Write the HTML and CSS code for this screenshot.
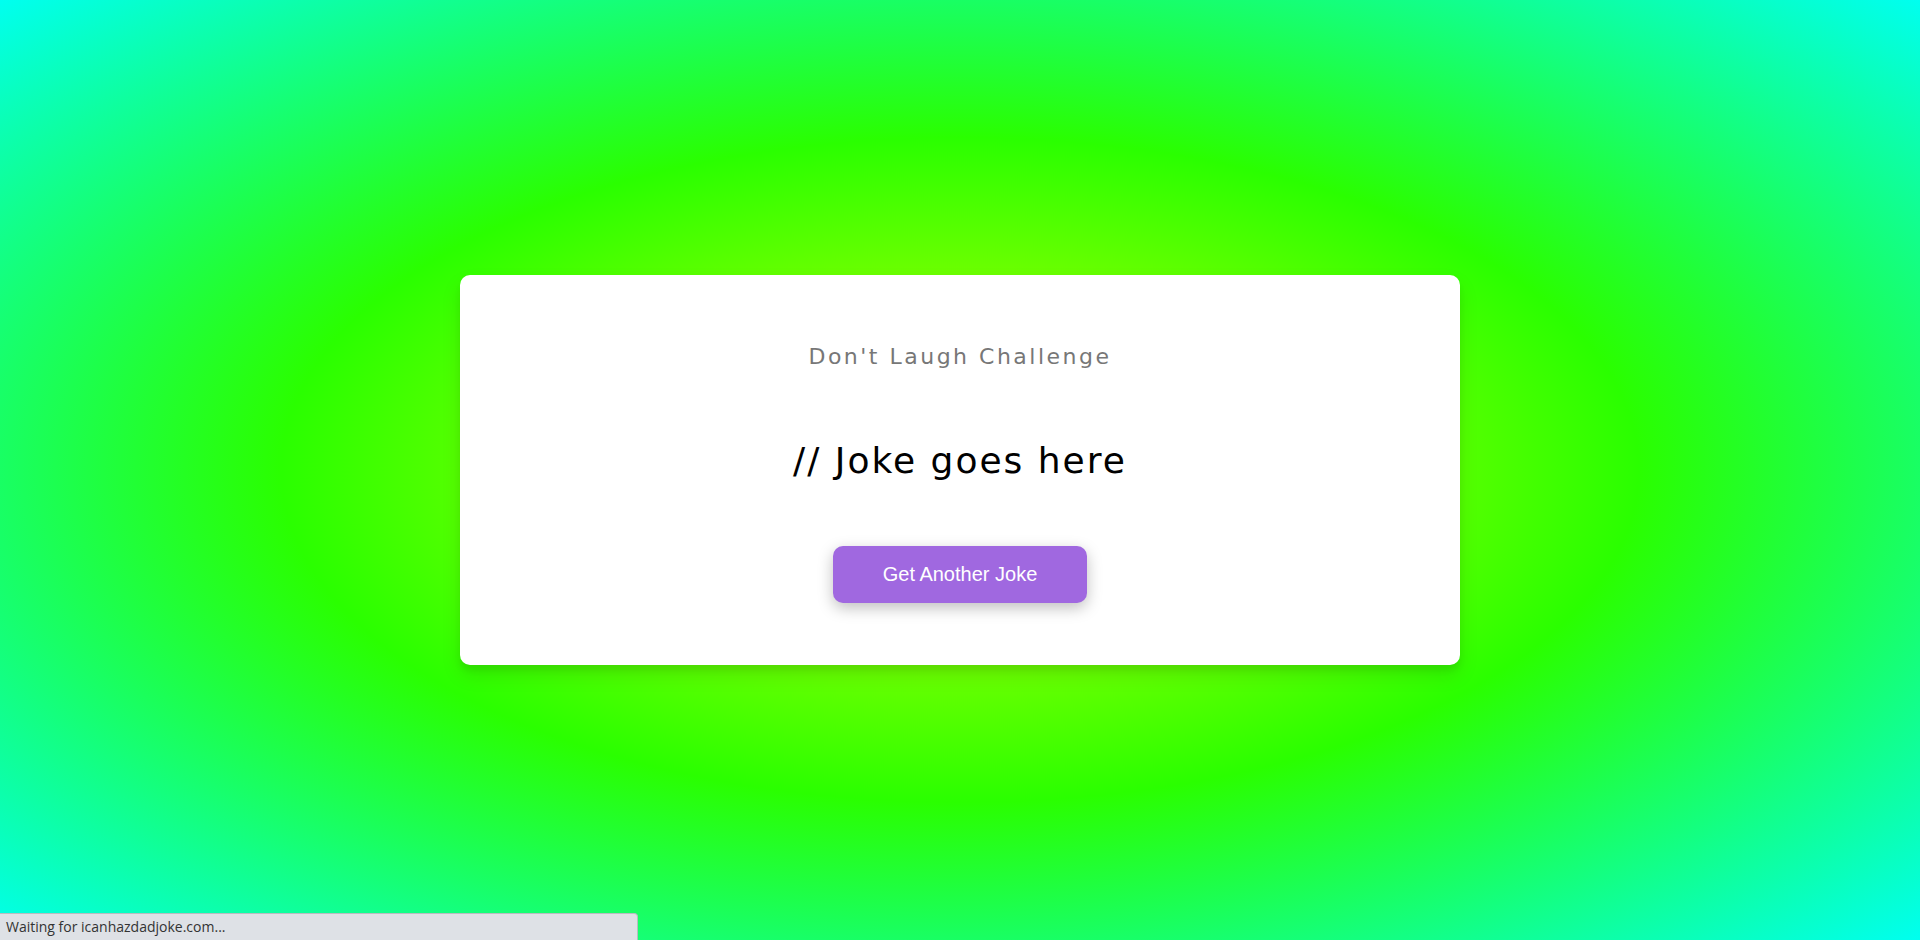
FILE: index.html
```html
<!DOCTYPE html>
<html lang="en">
<head>
<meta charset="UTF-8">
<title>Don't Laugh Challenge</title>
<link rel="stylesheet" href="styles.css">
</head>
<body>
  <main class="card">
    <h3 class="title">Don't Laugh Challenge</h3>
    <div class="joke">// Joke goes here</div>
    <button class="btn">Get Another Joke</button>
  </main>
  <div class="status">Waiting for icanhazdadjoke.com...</div>
</body>
</html>
```
FILE: styles.css
```css
* { box-sizing: border-box; }
html, body { height: 100%; }
body {
  margin: 0;
  min-height: 100vh;
  display: flex;
  align-items: center;
  justify-content: center;
  overflow: hidden;
  background: radial-gradient(ellipse farthest-corner at center, #caff00 0%, #2aff00 50%, #00fff0 100%);
  font-family: "Comic Sans MS", "DejaVu Sans", sans-serif;
}
.card {
  width: 1000px;
  background: #fff;
  border-radius: 10px;
  box-shadow: 0 10px 20px rgba(0, 0, 0, 0.1), 0 6px 6px rgba(0, 0, 0, 0.06);
  padding: 69px 20px 62px;
  text-align: center;
  display: flex;
  flex-direction: column;
  align-items: center;
}
.title {
  margin: 0;
  font-size: 22px;
  line-height: 1.2;
  font-weight: normal;
  letter-spacing: 2.5px;
  color: #777;
}
.joke {
  margin-top: 68px;
  font-size: 36px;
  line-height: 1.2;
  letter-spacing: 2px;
  color: #000;
}
.btn {
  margin-top: 64px;
  height: 57px;
  padding: 0 50px;
  border: none;
  border-radius: 10px;
  background: #a068e0;
  color: #fff;
  font-family: "Liberation Sans", Arial, sans-serif;
  font-size: 20px;
  box-shadow: 0 5px 15px rgba(0, 0, 0, 0.25);
  cursor: pointer;
}
.status {
  position: fixed;
  left: 0;
  bottom: 0;
  width: 638px;
  height: 27px;
  padding: 0 6px;
  background: #dee1e6;
  border: 1px solid #b9bcc1;
  border-left: none;
  border-bottom: none;
  border-top-right-radius: 4px;
  font-family: "Open Sans", "Noto Sans", sans-serif;
  font-size: 14px;
  line-height: 26px;
  color: #333;
}
```
